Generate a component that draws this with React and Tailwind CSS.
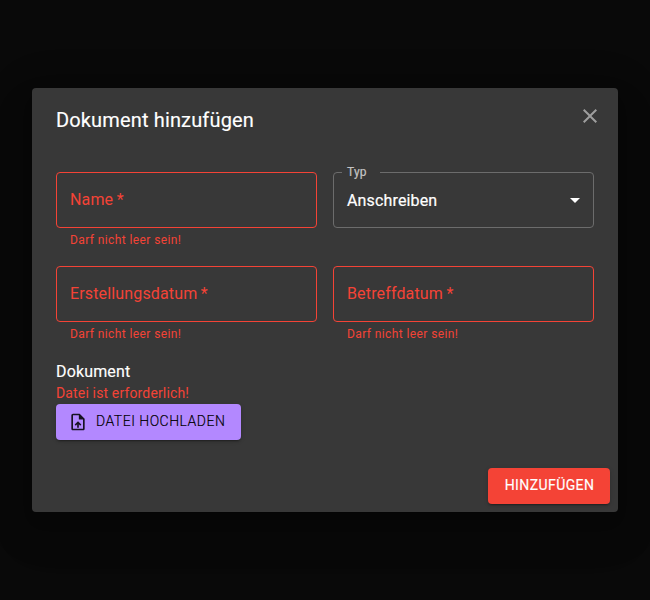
import React from 'react';

function Field({ label }) {
  return (
    <div>
      <div className="flex h-14 items-center rounded border border-[#f44336] px-[13px] text-base tracking-[0.15px] text-[#f44336]">
        {label}{'\u2009*'}
      </div>
      <p className="mx-3.5 mt-[3px] h-[19px] text-xs leading-[19px] tracking-[0.4px] text-[#f44336]">Darf nicht leer sein!</p>
    </div>
  );
}

export default function App() {
  return (
    <div className="flex h-[600px] w-[650px] items-center justify-center bg-[#090909] font-['Roboto',sans-serif] text-white">
      <div className="h-[424px] w-[586px] rounded bg-[#383838] shadow-[0px_11px_15px_-7px_rgba(0,0,0,0.2),0px_24px_38px_3px_rgba(0,0,0,0.14),0px_9px_46px_8px_rgba(0,0,0,0.12)]">
        <header className="flex h-16 items-start justify-between pl-6 pr-4 pt-4">
          <h2 className="text-xl font-normal leading-8 tracking-[0.15px] [-webkit-text-stroke:0.15px]">Dokument hinzufügen</h2>
          <svg className="h-6 w-6" viewBox="0 0 24 24" fill="#9e9e9e">
            <path d="M19 6.41 17.59 5 12 10.59 6.41 5 5 6.41 10.59 12 5 17.59 6.41 19 12 13.41 17.59 19 19 17.59 13.41 12z" />
          </svg>
        </header>
        <div className="grid grid-cols-2 gap-4 px-6 pt-5">
          <Field label="Name" />
          <fieldset className="-mt-[5px] h-[61px] rounded border border-[#6c6c6c] px-[8px]">
            <legend className="h-[11px] w-[38px] px-[5px] text-xs leading-[11px] tracking-[0.15px] text-[#c3c3c3] [-webkit-text-stroke:0.2px]">Typ</legend>
            <div className="-mr-0.5 flex h-[46px] items-center justify-between pl-[5px] text-base tracking-[0.15px] [-webkit-text-stroke:0.2px]">
              Anschreiben
              <svg className="mb-0.5 h-6 w-6" viewBox="0 0 24 24" fill="white"><path d="M7 10l5 5 5-5z" /></svg>
            </div>
          </fieldset>
          <Field label="Erstellungsdatum" />
          <Field label="Betreffdatum" />
        </div>
        <section className="px-6 pt-4">
          <h3 className="text-base leading-6 tracking-[0.15px] [-webkit-text-stroke:0.15px]">Dokument</h3>
          <p className="-mt-px h-[21px] text-sm leading-5 tracking-[0.15px] text-[#f44336]">Datei ist erforderlich!</p>
          <button className="flex h-9 w-[185px] items-center rounded bg-[#b388ff] pl-3 text-sm font-light tracking-[0.48px] text-black/87 shadow-[0px_3px_1px_-2px_rgba(0,0,0,0.2),0px_2px_2px_0px_rgba(0,0,0,0.14),0px_1px_5px_0px_rgba(0,0,0,0.12)]">
            <svg className="mr-2 h-5 w-5" viewBox="0 0 24 24" fill="currentColor"><path d="M14 2H6c-1.1 0-1.99.9-1.99 2L4 20c0 1.1.89 2 1.99 2H18c1.1 0 2-.9 2-2V8l-6-6zm4 18H6V4h7v5h5v11zM8 15.01l1.41 1.41L11 14.84V19h2v-4.16l1.59 1.59L16 15.01 12.01 11z" /></svg>
            <span className="-translate-y-px text-black [-webkit-text-stroke:0.15px]">DATEI HOCHLADEN</span>
          </button>
        </section>
        <footer className="flex justify-end p-2 pt-7">
          <button className="h-9 w-[122px] rounded bg-[#f44336] pb-0.5 pl-px text-sm font-normal tracking-[0.42px] shadow-[0px_3px_1px_-2px_rgba(0,0,0,0.2),0px_2px_2px_0px_rgba(0,0,0,0.14),0px_1px_5px_0px_rgba(0,0,0,0.12)] [-webkit-text-stroke:0.15px]">HINZUFÜGEN</button>
        </footer>
      </div>
    </div>
  );
}
